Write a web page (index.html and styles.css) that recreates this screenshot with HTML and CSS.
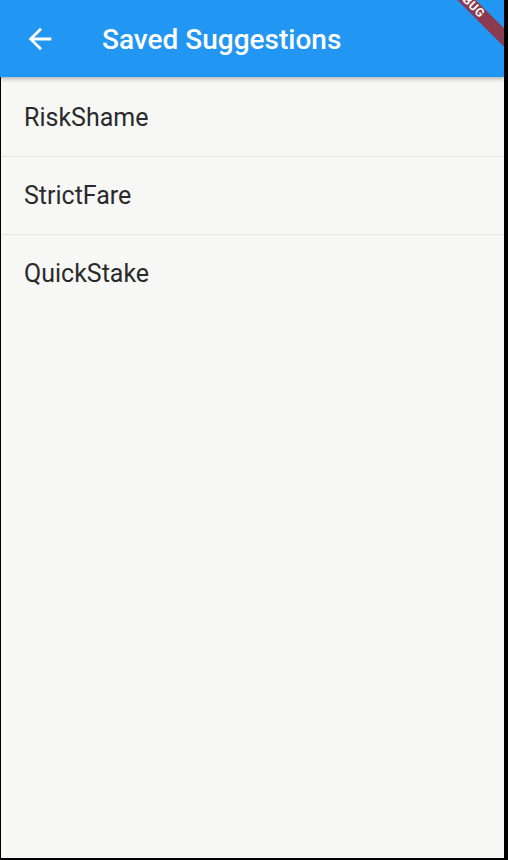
FILE: index.html
```html
<!DOCTYPE html>
<html>
<head>
<meta charset="utf-8">
<link rel="stylesheet" href="styles.css">
</head>
<body>
<div class="screen">
  <header class="appbar">
    <svg class="back" viewBox="0 0 24 24" width="34" height="34"><path fill="#fff" d="M20 11H7.83l5.59-5.59L12 4l-8 8 8 8 1.41-1.41L7.83 13H20v-2z"/></svg>
    <h1 class="title">Saved Suggestions</h1>
  </header>
  <ul class="list">
    <li class="item">RiskShame</li>
    <li class="item">StrictFare</li>
    <li class="item">QuickStake</li>
  </ul>
  <div class="banner"><span>DEBUG</span></div>
</div>
</body>
</html>
```
FILE: styles.css
```css
html, body {
  margin: 0;
  padding: 0;
  background: #000;
  width: 508px;
  height: 860px;
  overflow: hidden;
}
.screen {
  position: relative;
  width: 504px;
  height: 858px;
  background: #f7f8f6;
  overflow: hidden;
  display: flex;
  flex-direction: column;
  font-family: Roboto, "Liberation Sans", sans-serif;
}
.appbar {
  height: 77px;
  flex: none;
  background: #2196f3;
  display: flex;
  align-items: center;
  padding-left: 23px;
  box-shadow: 0 2px 4px rgba(0,0,0,0.28);
  position: relative;
  z-index: 1;
}
.back {
  display: block;
}
.title {
  margin: 0 0 0 45px;
  font-size: 28px;
  font-weight: 500;
  color: #fff;
  padding-top: 2px;
}
.list {
  list-style: none;
  margin: 0;
  padding: 2px 0 0 0;
  flex: 1;
  border-left: 1px solid #000;
}
.item {
  height: 77px;
  border-bottom: 1px solid #e6e7e5;
  display: flex;
  align-items: center;
  padding-left: 23px;
  font-size: 25px;
  color: #2a2a2a;
}
.item:last-child {
  border-bottom: none;
}
.banner {
  position: absolute;
  left: 415px;
  top: -3.5px;
  width: 110px;
  height: 13px;
  background: #8b3a50;
  transform: rotate(45deg);
  display: flex;
  align-items: center;
  justify-content: center;
  z-index: 2;
}
.banner span {
  color: #fff;
  font-size: 12px;
  line-height: 12px;
  font-weight: 700;
  letter-spacing: 0.5px;
  margin: -2px 6px 0 0;
}
```
